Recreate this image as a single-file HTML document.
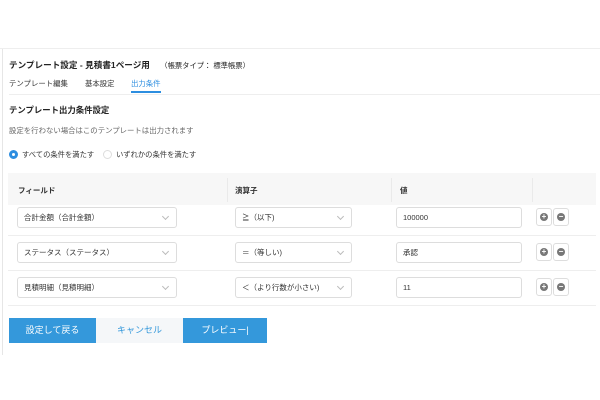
<!DOCTYPE html>
<html><head><meta charset="utf-8"><style>
*{box-sizing:border-box;margin:0;padding:0}
body{width:600px;height:400px;background:#fff;font-family:"Liberation Sans","Noto Sans CJK JP",sans-serif;color:#333;position:relative;overflow:hidden}
.a{position:absolute;white-space:nowrap}
.sel,.inp{position:absolute;height:21px;border:1px solid #ddd;border-radius:3px;background:#fff;font-size:7.5px;line-height:19px;padding-left:6px;color:#333}
.sel:after{content:"";position:absolute;right:8px;top:6px;width:4px;height:4px;border-right:1px solid #bbb;border-bottom:1px solid #bbb;transform:rotate(45deg)}
.bt{position:absolute;width:16px;height:18px;border:1px solid #ddd;border-radius:3px;background:#fff}
.bt i{position:absolute;left:3px;top:4px;width:8px;height:8px;border-radius:50%;background:#777;color:#fff;font-size:8px;line-height:8px;text-align:center;font-style:normal;font-weight:bold}
.hl{position:absolute;left:8px;width:588px;height:1px;background:#eee}
.btn{position:absolute;top:318px;height:25px;font-size:9px;line-height:25px;text-align:center}
</style></head><body>
<div class="a" style="left:0;top:48px;width:600px;height:1px;background:#eee"></div>
<div class="a" style="left:2px;top:49px;width:1px;height:306px;background:#e6e6e6"></div>
<div class="a" style="left:9px;top:59px;font-size:8.6px;font-weight:bold;color:#222">テンプレート設定 - 見積書1ページ用 <span style="font-weight:normal;font-size:7.3px;margin-left:8px">（帳票タイプ： 標準帳票）</span></div>
<div class="a" style="left:9px;top:78px;font-size:7.4px">テンプレート編集</div>
<div class="a" style="left:85px;top:78px;font-size:7.4px">基本設定</div>
<div class="a" style="left:131px;top:78px;font-size:7.4px;color:#2d8ee0">出力条件</div>
<div class="a" style="left:131px;top:91px;width:30px;height:2px;background:#2d8ee0"></div>
<div class="a" style="left:9px;top:94px;width:591px;height:1px;background:#eee"></div>
<div class="a" style="left:9px;top:104px;font-size:8.4px;font-weight:bold;color:#222">テンプレート出力条件設定</div>
<div class="a" style="left:9px;top:125px;font-size:7.4px;color:#666">設定を行わない場合はこのテンプレートは出力されます</div>
<div class="a" style="left:9px;top:150px;width:9px;height:9px;border-radius:50%;border:3px solid #2d8ee0"></div>
<div class="a" style="left:22px;top:150px;font-size:7.3px">すべての条件を満たす</div>
<div class="a" style="left:103px;top:150px;width:9px;height:9px;border-radius:50%;border:1px solid #ddd"></div>
<div class="a" style="left:116px;top:150px;font-size:7.3px">いずれかの条件を満たす</div>
<div class="a" style="left:8px;top:173px;width:588px;height:32px;background:#f7f7f7"></div>
<div class="a" style="left:227px;top:178px;width:1px;height:24px;background:#eaeaea"></div>
<div class="a" style="left:391px;top:178px;width:1px;height:24px;background:#eaeaea"></div>
<div class="a" style="left:532px;top:178px;width:1px;height:24px;background:#eaeaea"></div>
<div class="a" style="left:18px;top:185px;font-size:7.5px;font-weight:bold">フィールド</div>
<div class="a" style="left:235px;top:185px;font-size:7.5px;font-weight:bold">演算子</div>
<div class="a" style="left:400px;top:185px;font-size:7.5px;font-weight:bold">値</div>
<div class="hl" style="top:235px"></div><div class="hl" style="top:270px"></div><div class="hl" style="top:305px"></div>

<div class="sel" style="left:17px;top:207px;width:160px">合計金額（合計金額）</div>
<div class="sel" style="left:235px;top:207px;width:117px">≧（以下)</div>
<div class="inp" style="left:396px;top:207px;width:126px">100000</div>
<div class="bt" style="left:536px;top:208px"><i>+</i></div><div class="bt" style="left:553px;top:208px"><i>−</i></div>

<div class="sel" style="left:17px;top:242px;width:160px">ステータス（ステータス）</div>
<div class="sel" style="left:235px;top:242px;width:117px">＝（等しい)</div>
<div class="inp" style="left:396px;top:242px;width:126px">承認</div>
<div class="bt" style="left:536px;top:243px"><i>+</i></div><div class="bt" style="left:553px;top:243px"><i>−</i></div>

<div class="sel" style="left:17px;top:277px;width:160px">見積明細（見積明細）</div>
<div class="sel" style="left:235px;top:277px;width:117px">＜（より行数が小さい)</div>
<div class="inp" style="left:396px;top:277px;width:126px">11</div>
<div class="bt" style="left:536px;top:278px"><i>+</i></div><div class="bt" style="left:553px;top:278px"><i>−</i></div>

<div class="btn" style="left:9px;width:87px;background:#3498db;color:#fff">設定して戻る</div>
<div class="btn" style="left:96px;width:87px;background:#f5f7f9;color:#3498db">キャンセル</div>
<div class="btn" style="left:183px;width:84px;background:#3498db;color:#fff">プレビュー|</div>
</body></html>
